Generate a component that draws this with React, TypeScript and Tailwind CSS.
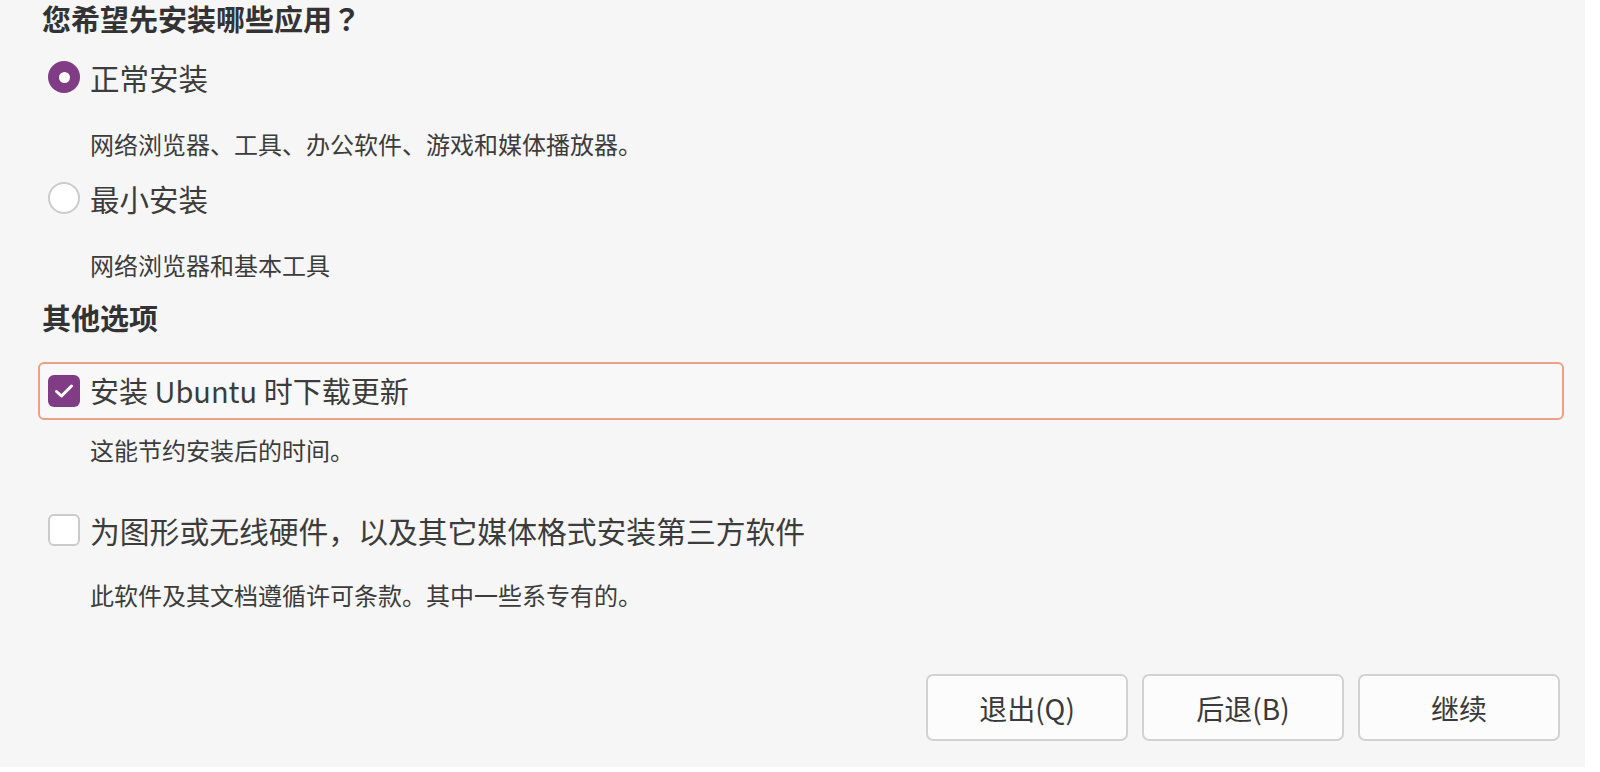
import React from "react";

const font = { fontFamily: '"Noto Sans CJK SC", "Noto Sans", sans-serif' };
const tcFont = { fontFamily: '"Noto Sans CJK TC", "Noto Sans CJK SC", sans-serif' };

function Radio({ checked }: { checked: boolean }) {
  return checked ? (
    <div className="w-[32px] h-[32px] rounded-full bg-[#803d86] flex items-center justify-center shrink-0">
      <div className="w-[11px] h-[11px] rounded-full bg-white" />
    </div>
  ) : (
    <div className="w-[32px] h-[32px] rounded-full bg-white border-2 border-[#cbcbcb] shrink-0" />
  );
}

function Check({ checked }: { checked: boolean }) {
  return checked ? (
    <div className="w-[32px] h-[32px] rounded-[6px] bg-[#803d86] flex items-center justify-center shrink-0">
      <svg width="24" height="24" viewBox="0 0 24 24" fill="none">
        <path d="M4.5 12.5 L9.5 17 L19.5 7" stroke="white" strokeWidth="3" strokeLinecap="round" strokeLinejoin="round" />
      </svg>
    </div>
  ) : (
    <div className="w-[32px] h-[32px] rounded-[6px] bg-white border-2 border-[#cbcbcb] shrink-0" />
  );
}

function Btn({ label }: { label: string }) {
  return (
    <button className="w-[202px] h-[67px] rounded-[7px] border-2 border-[#d2d2d2] bg-[#fcfcfc] text-[28px] text-[#3a3a3a] flex items-center justify-center">
      {label}
    </button>
  );
}

export default function App() {
  return (
    <div className="w-[1600px] h-[772px] bg-white overflow-hidden" style={font}>
      <div className="w-[1585px] h-[767px] bg-[#f6f6f6] flex flex-col">
        <div className="h-[36px] pt-[3px] leading-[30px] pl-[42px] text-[29px] font-bold text-[#333333]">
          您希望先安装哪些应用<span style={tcFont}>？</span>
        </div>
        <div className="mt-[21px] h-[40px] flex items-center pl-[48px] gap-[10px]">
          <Radio checked />
          <span className="text-[29.5px] text-[#3c3c3c]">正常安装</span>
        </div>
        <div className="mt-[31px] h-[32px] leading-[32px] pl-[90px] text-[24px] text-[#3c3c3c]">
          网络浏览器、工具、办公软件、游戏和媒体播放器。
        </div>
        <div className="mt-[18px] h-[40px] flex items-center pl-[48px] gap-[10px]">
          <Radio checked={false} />
          <span className="text-[29.5px] text-[#3c3c3c]">最小安装</span>
        </div>
        <div className="mt-[31px] h-[32px] leading-[32px] pl-[90px] text-[24px] text-[#3c3c3c]">
          网络浏览器和基本工具
        </div>
        <div className="mt-[18px] h-[36px] leading-[36px] pl-[42px] text-[29px] font-bold text-[#333333]">
          其他选项
        </div>
        <div className="mt-[27px] ml-[38px] w-[1526px] h-[58px] border-[2.5px] border-[#eaa185] rounded-[6px] bg-[#f8f8f8] flex items-center pl-[8px] gap-[10px]">
          <Check checked />
          <span className="text-[29px] text-[#3c3c3c]">安装 Ubuntu 时下载更新</span>
        </div>
        <div className="mt-[14px] h-[32px] leading-[32px] pl-[90px] text-[24px] text-[#3c3c3c]">
          这能节约安装后的时间。
        </div>
        <div className="mt-[44px] h-[40px] flex items-center pl-[48px] gap-[10px]">
          <Check checked={false} />
          <span className="text-[29.8px] text-[#3c3c3c]">为图形或无线硬件，以及其它媒体格式安装第三方软件</span>
        </div>
        <div className="mt-[29px] h-[32px] leading-[32px] pl-[90px] text-[24px] text-[#3c3c3c]">
          此软件及其文档遵循许可条款。其中一些系专有的。
        </div>
        <div className="mt-[63px] flex justify-end gap-[14px] pr-[25px]">
          <Btn label="退出(Q)" />
          <Btn label="后退(B)" />
          <Btn label="继续" />
        </div>
      </div>
    </div>
  );
}
